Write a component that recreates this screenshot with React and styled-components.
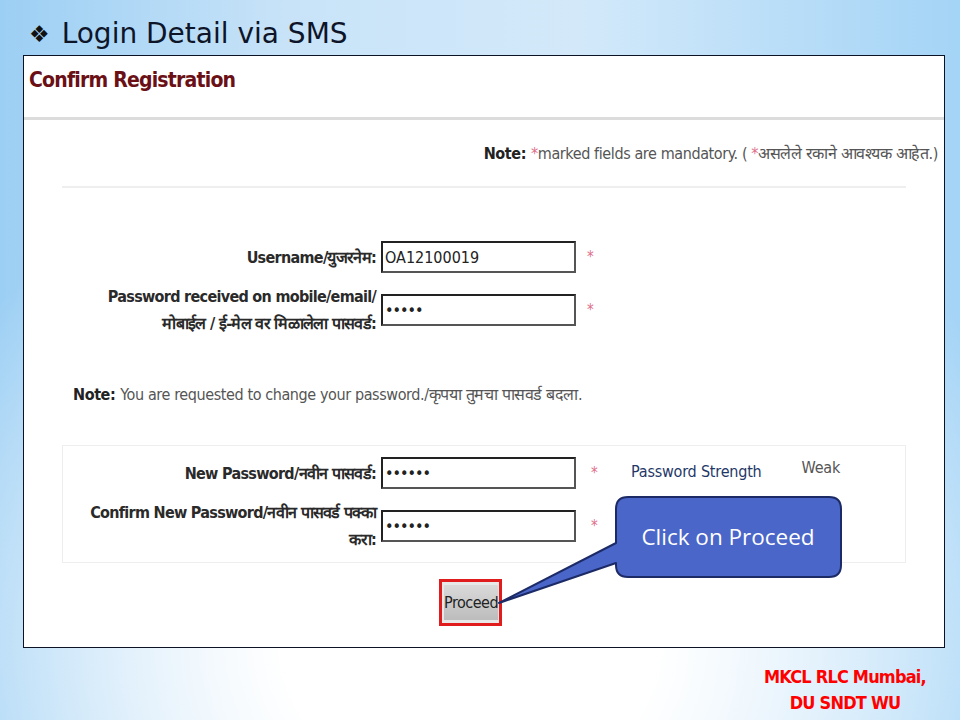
import React from 'react';
import styled, { createGlobalStyle } from 'styled-components';

const Global = createGlobalStyle`
  html, body {
    margin: 0;
    padding: 0;
  }
  body {
    font-family: "DejaVu Sans", sans-serif;
  }
`;

const Slide = styled.div`
  position: relative;
  width: 960px;
  height: 720px;
  box-sizing: border-box;
  padding-top: 13px;
  overflow: hidden;
  background:
    radial-gradient(ellipse 620px 520px at 470px 640px, #ffffff 0%, #ffffff 30%, rgba(255,255,255,0) 100%),
    linear-gradient(90deg, #9ccff4 0%, #c8e3f8 30%, #d3e9fa 60%, #a4d4f6 100%);
`;

const Title = styled.h1`
  margin: 0 0 0 29px;
  height: 42px;
  font-family: "DejaVu Sans", sans-serif;
  font-weight: normal;
  font-size: 28px;
  line-height: 40px;
  color: #0e1529;
  display: flex;
  align-items: center;
  gap: 12px;
`;

const Bullet = styled.span`
  font-size: 23px;
  color: #111;
`;

const Panel = styled.div`
  position: relative;
  margin-left: 23px;
  width: 922px;
  height: 593px;
  box-sizing: border-box;
  border: 1px solid #0c1324;
  background: #ffffff;
  font-family: "DejaVu Sans Condensed", "DejaVu Sans", sans-serif;
`;

const Heading = styled.div`
  height: 61px;
  box-sizing: border-box;
  padding: 10px 0 0 5px;
  font-size: 21px;
  line-height: 28px;
  font-weight: bold;
  color: #6a1016;
  letter-spacing: -0.8px;
`;

const Rule = styled.div`
  height: ${p => p.$h || 2}px;
  background: ${p => p.$c || '#dddddd'};
  margin: 0 ${p => p.$inset || 0}px;
`;

const NoteRow = styled.div`
  height: ${p => (p.$left ? 'auto' : '66px')};
  margin-top: ${p => (p.$left ? '46px' : '0')};
  display: flex;
  align-items: center;
  justify-content: ${p => (p.$left ? 'flex-start' : 'flex-end')};
  padding: ${p => (p.$left ? '0 0 0 49px' : '0 6px 0 0')};
  font-size: 16px;
  color: #555555;
  letter-spacing: -0.4px;
`;

const Strong = styled.b`
  color: #222222;
  margin-right: 5px;
`;

const Star = styled.span`
  color: #e0708a;
`;

const Form = styled.div`
  display: grid;
  grid-template-columns: ${p => p.$label}px 195px 40px auto;
  column-gap: 5px;
  row-gap: 10px;
  align-items: center;
  margin-top: ${p => p.$top || 0}px;
`;

const Label = styled.div`
  text-align: right;
  font-size: 16px;
  line-height: 27px;
  color: #2a2a2a;
  font-weight: bold;
  letter-spacing: -0.7px;
`;

const Input = styled.div`
  height: 32px;
  box-sizing: border-box;
  border: 2px solid #222222;
  border-right-color: #555;
  border-bottom-color: #555;
  background: #fff;
  display: flex;
  align-items: center;
  padding-left: 2px;
  font-size: 16px;
  color: #222;
  letter-spacing: ${p => (p.$dots ? '-1px' : '0')};
`;

const Req = styled.span`
  color: #e0708a;
  font-size: 15px;
  padding-left: ${p => p.$pad || 6}px;
  align-self: center;
`;

const Strength = styled.div`
  display: flex;
  align-items: flex-start;
  gap: 40px;
  padding: 5px 0 0 5px;
  font-size: 16px;
  color: #1f3868;
  align-self: start;
  letter-spacing: -0.2px;
`;

const Weak = styled.span`
  color: #555;
  margin-top: -4px;
`;

const Box = styled.div`
  margin: 40px 38px 0;
  border: 1px solid #eeeeee;
  padding: 11px 0 9px;
`;

const Proceed = styled.div`
  margin: 16px 0 0 415px;
  width: 63px;
  height: 47px;
  box-sizing: border-box;
  border: 3px solid #e01c1c;
  background: #e8e8e8;
  padding: 3px 2px;
  display: flex;
`;

const ProceedFace = styled.div`
  flex: 1;
  background: linear-gradient(#dadada, #bcbcbc);
  display: flex;
  align-items: center;
  justify-content: center;
  font-size: 16px;
  letter-spacing: -0.5px;
  color: #222;
`;

const Callout = styled.svg`
  position: absolute;
  left: 447px;
  top: 435px;
  overflow: visible;
`;

const Footer = styled.div`
  display: flex;
  flex-direction: column;
  align-items: center;
  width: 170px;
  margin: 16px 0 0 760px;
  font-family: "DejaVu Sans Condensed", "Liberation Sans Narrow", sans-serif;
  font-weight: bold;
  font-size: 18px;
  line-height: 26px;
  color: #ff0000;
  letter-spacing: -0.8px;
`;

export default function App() {
  return (
    <>
      <Global />
      <Slide>
        <Title>
          <Bullet>❖</Bullet>
          Login Detail via SMS
        </Title>
        <Panel>
          <Heading>Confirm Registration</Heading>
          <Rule $h={3} $c="#dcdcdc" />
          <NoteRow>
            <Strong>Note:</Strong>
            <Star>*</Star>marked fields are mandatory. (&nbsp;<Star>*</Star>असलेले रकाने आवश्यक आहेत.)
          </NoteRow>
          <Rule $h={2} $c="#eeeeee" $inset={38} />

          <Form $label={352} $top={53}>
            <Label>Username/युजरनेम:</Label>
            <Input>OA12100019</Input>
            <Req>*</Req>
            <span />
            <Label>
              Password received on mobile/email/
              <br />
              मोबाईल / ई-मेल वर मिळालेला पासवर्ड:
            </Label>
            <Input $dots>•••••</Input>
            <Req>*</Req>
            <span />
          </Form>

          <NoteRow $left>
            <Strong>Note:</Strong>
            You are requested to change your password./कृपया तुमचा पासवर्ड बदला.
          </NoteRow>

          <Box>
            <Form $label={313}>
              <Label>New Password/नवीन पासवर्ड:</Label>
              <Input $dots>••••••</Input>
              <Req $pad={10}>*</Req>
              <Strength>
                Password Strength
                <Weak>Weak</Weak>
              </Strength>
              <Label>
                Confirm New Password/नवीन पासवर्ड पक्का
                <br />
                करा:
              </Label>
              <Input $dots>••••••</Input>
              <Req $pad={10}>*</Req>
              <span />
            </Form>
          </Box>

          <Proceed>
            <ProceedFace>Proceed</ProceedFace>
          </Proceed>

          <Callout width="375" height="120" viewBox="0 0 375 120">
            <path
              d="M157 6 H358 Q370 6 370 18 V74 Q370 86 358 86 H157 Q145 86 145 74 V72 L28 112 L145 52 V18 Q145 6 157 6 Z"
              fill="#4a66c8"
              stroke="#1c2a66"
              strokeWidth="2"
              strokeLinejoin="round"
            />
            <text
              x="257"
              y="54"
              textAnchor="middle"
              fill="#ffffff"
              fontFamily="'Open Sans', Lato, sans-serif"
              fontSize="22.5"
            >
              Click on Proceed
            </text>
          </Callout>
        </Panel>
        <Footer>
          <span>MKCL RLC Mumbai,</span>
          <span>DU SNDT WU</span>
        </Footer>
      </Slide>
    </>
  );
}
